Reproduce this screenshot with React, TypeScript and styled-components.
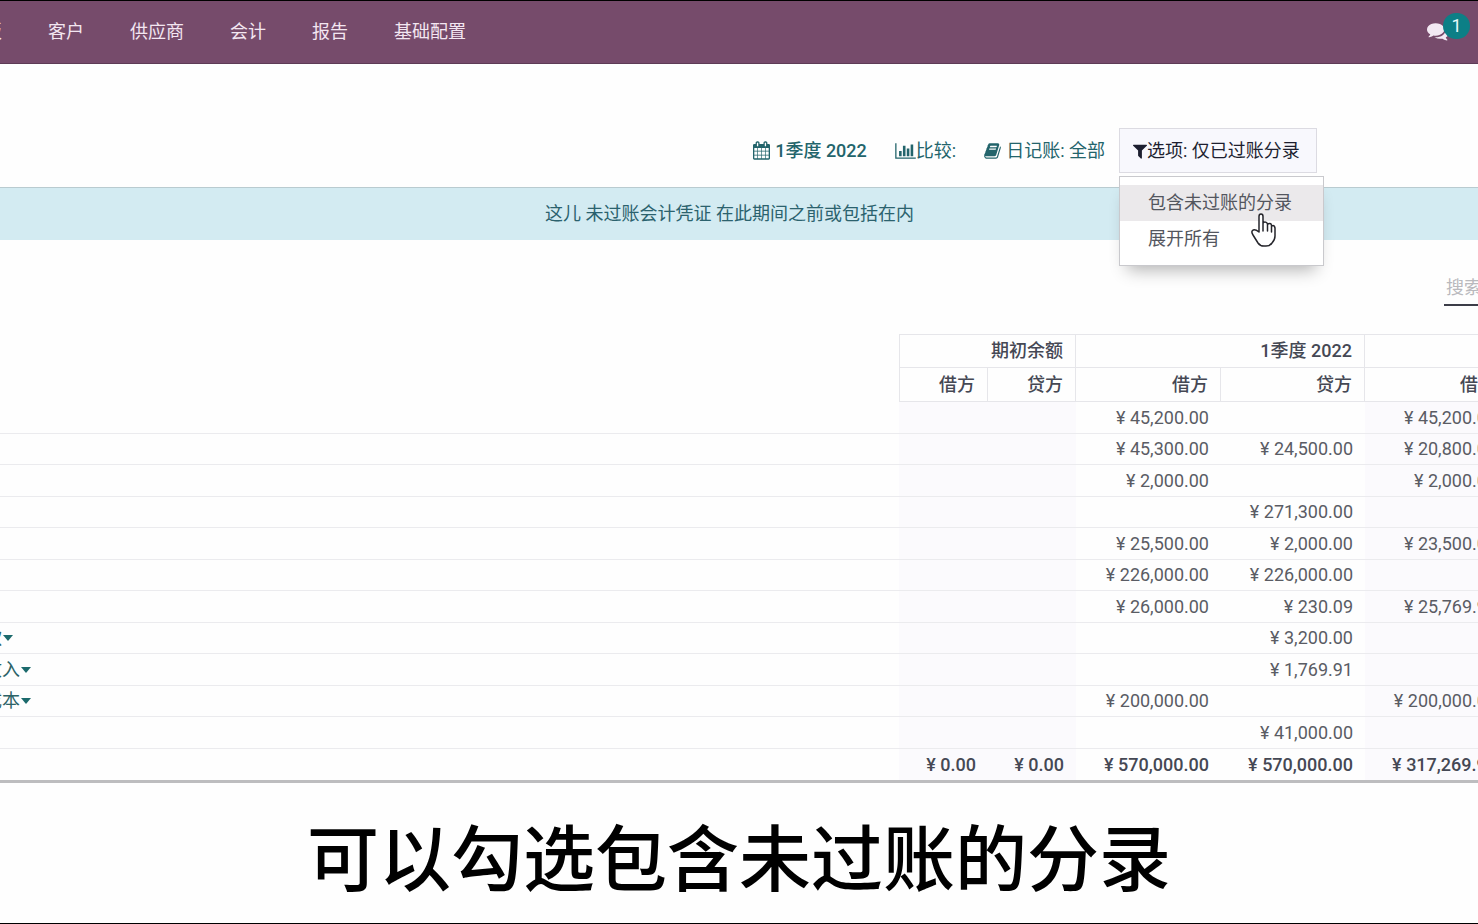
import React from "react";
import styled, { createGlobalStyle, css } from "styled-components";

const GlobalStyle = createGlobalStyle`
  *, *::before, *::after { box-sizing: border-box; }
  body {
    margin: 0;
    background: #fefefe;
    color: #4c4f57;
    font-family: Roboto, "Noto Sans CJK SC", sans-serif;
    font-size: 18px;
    line-height: 26px;
    overflow-x: hidden;
  }
  button, input { font: inherit; color: inherit; }
`;

const Page = styled.div`
  min-height: 100vh;
  display: flex;
  flex-direction: column;
  overflow-x: clip;
  border-top: 1px solid #000;
  border-bottom: 1px solid #000;
`;

const TopBar = styled.header`
  display: flex;
  align-items: center;
  justify-content: space-between;
  height: 63px;
  padding: 0 8px 0 0;
  background: #764b6b;
  border-bottom: 1px solid #5d3b56;
`;

const NavList = styled.nav`
  display: flex;
  gap: 46px;
  margin-left: -34px;
`;

const NavLink = styled.a`
  color: #f3e6f1;
  text-decoration: none;
  white-space: nowrap;
`;

const MessagesButton = styled.button`
  position: relative;
  display: flex;
  width: 43px;
  height: 36px;
  padding: 6px 0 0;
  border: 0;
  background: none;
  color: #f3e9f3;
`;

const Badge = styled.span`
  position: absolute;
  top: -1px;
  right: 0;
  width: 27px;
  height: 26px;
  border-radius: 13px;
  background: #0c7f86;
  color: #e6fafa;
  font-size: 18px;
  line-height: 25px;
  text-align: center;
`;

const FilterBar = styled.div`
  display: flex;
  justify-content: flex-end;
  height: 123px;
  padding: 64px 161px 14px 0;
`;

const FilterButton = styled.button<{ $open?: boolean; $strong?: boolean; $gap?: number }>`
  display: flex;
  align-items: center;
  justify-content: center;
  gap: ${(p) => p.$gap ?? 0}px;
  height: 45px;
  padding: 0 13px;
  border: 1px solid transparent;
  background: transparent;
  color: #23646b;
  font-weight: ${(p) => (p.$strong ? 500 : 400)};
  white-space: nowrap;
  ${(p) =>
    p.$open &&
    css`
      justify-content: flex-start;
      min-width: 198px;
      border-color: #dcdbe2;
      background: #f8f8fd;
      color: #1d1f30;
    `}
`;

const Dropdown = styled.div`
  position: relative;
`;

const Menu = styled.div`
  position: absolute;
  z-index: 2;
  top: 48px;
  left: 0;
  width: 205px;
  padding: 8px 0;
  border: 1px solid #c9c9cd;
  background: #fff;
  box-shadow: 0 12px 16px -8px rgba(0, 0, 0, 0.3);
`;

const MenuItem = styled.button<{ $hovered?: boolean }>`
  display: block;
  width: 100%;
  height: 36px;
  padding: 0 0 0 28px;
  border: 0;
  background: ${(p) => (p.$hovered ? "#ebe9eb" : "transparent")};
  color: #53565e;
  text-align: left;
`;

const Pointer = styled.svg`
  position: absolute;
  top: 35px;
  left: 131px;
`;

const Notice = styled.div`
  height: 53px;
  padding: 13px 19px 13px 0;
  border-top: 1px solid #b9cbd0;
  background: #d3ebf2;
  color: #2b626e;
  text-align: center;
`;

const SearchRow = styled.div`
  display: flex;
  justify-content: flex-end;
  padding: 33px 0 28px;
`;

const SearchInput = styled.input`
  width: 240px;
  height: 33px;
  margin-right: -206px;
  padding: 0 2px 3px;
  border: 0;
  border-bottom: 2px solid #3c3d48;
  border-radius: 0;
  background: transparent;
  outline: 0;
  &::placeholder { color: #b9b9bd; opacity: 1; }
`;

const TableFrame = styled.div`
  margin-right: -31px;
`;

const Ledger = styled.table`
  width: 100%;
  table-layout: fixed;
  border-collapse: separate;
  border-spacing: 0;
  border-bottom: 3px solid #bdbdbf;
`;

const Col = styled.col<{ $w?: number }>`
  width: ${(p) => (p.$w ? `${p.$w}px` : "auto")};
`;

const HeadRow = styled.tr<{ $h: number }>`
  height: ${(p) => p.$h}px;
`;

const HeadCell = styled.th<{ $first?: boolean }>`
  padding: 0 12px 0 0;
  border-top: 1px solid #e6e6ea;
  border-right: 1px solid #e6e6ea;
  border-left: ${(p) => (p.$first ? "1px solid #e6e6ea" : "0")};
  color: #454854;
  font-weight: 500;
  text-align: right;
  white-space: nowrap;
`;

const HeadSpacer = styled.td`
  padding: 0;
`;

const BodyRow = styled.tr<{ $total?: boolean }>`
  height: 32px;
  font-weight: ${(p) => (p.$total ? 500 : 400)};
  color: ${(p) => (p.$total ? "#454854" : "#5a5c64")};
  &:nth-child(even):not(:last-child) { height: 31px; }
`;

const AmountCell = styled.td<{ $tinted?: boolean }>`
  padding: 0 12px 0 0;
  border-top: 1px solid #ebebee;
  background: ${(p) => (p.$tinted ? "#fbfafd" : "transparent")};
  line-height: 24px;
  text-align: right;
  white-space: nowrap;
  tr:first-child > & { border-top-color: #e6e6ea; }
`;

const NameCell = styled.th`
  padding: 0;
  border-top: 1px solid #ebebee;
  font-weight: 400;
  line-height: 24px;
  text-align: left;
  tr:first-child > & { border-top-color: transparent; }
`;

const AccountButton = styled.button<{ $hidden: number }>`
  display: flex;
  align-items: center;
  gap: 1px;
  margin-left: -${(p) => p.$hidden}px;
  padding: 0;
  border: 0;
  background: none;
  color: #2c6367;
  line-height: 24px;
`;

const Caret = styled.span`
  border: 5px solid transparent;
  border-top: 6px solid #1c6a6c;
  border-bottom: 0;
`;

const Caption = styled.p`
  margin: 0;
  padding: 19px 0 16px;
  color: #000;
  font-family: "Noto Sans CJK SC", sans-serif;
  font-size: 72px;
  font-weight: 500;
  line-height: 104px;
  text-align: center;
  white-space: nowrap;
`;

type IconProps = { box: string; width: number; height: number; d: string };
const Icon = ({ box, width, height, d }: IconProps) => (
  <svg viewBox={box} width={width} height={height} fill="currentColor" aria-hidden="true">
    <path d={d} />
  </svg>
);

const CALENDAR =
  "M128 1664h288v-288H128v288zm352 0h320v-288H480v288zM128 1312h288V992H128v320zm352 0h320V992H480v320zM128 928h288V640H128v288zm736 736h320v-288H864v288zM480 928h320V640H480v288zm768 736h288v-288h-288v288zm-384-352h320V992H864v320zM512 448V160q0-13-9.500-22.500T480 128h-64q-13 0-22.500 9.500T384 160v288q0 13 9.500 22.500T416 480h64q13 0 22.500-9.500T512 448zm736 864h288V992h-288v320zM864 928h320V640H864v288zm384 0h288V640h-288v288zm32-480V160q0-13-9.500-22.500T1248 128h-64q-13 0-22.500 9.500T1152 160v288q0 13 9.500 22.500t22.500 9.500h64q13 0 22.500-9.500t9.500-22.500zm384-64v1280q0 52-38 90t-90 38H128q-52 0-90-38t-38-90V384q0-52 38-90t90-38h128v-96q0-66 47-113T416 0h64q66 0 113 47t47 113v96h384v-96q0-66 47-113t113-47h64q66 0 113 47t47 113v96h128q52 0 90 38t38 90z";
const BARS =
  "M640 896v512H384V896h256zm384-512v1024H768V384h256zm1024 1152v128H0V128h128v1408h1920zm-640-896v768h-256V640h256zm384-384v1152h-256V256h256z";
const BOOK =
  "M1639 478q40 57 18 129l-275 906q-19 64-76.500 107.500T1183 1664H260q-77 0-148.500-53.500T12 1479q-24-67-2-127 0-4 3-27t4-37q1-8-3-21.500t-3-19.500q2-11 8-21t16.500-23.500T52 1179q23-38 45-91.500t30-91.500q3-10 .5-30t-.5-28q3-11 17-28t17-23q21-36 42-92t25-90q1-9-2.500-32t.5-28q4-13 22-30.500t22-22.500q19-26 42.500-84.500T340 411q1-8-3-25.500t-2-26.500q2-8 9-18t18-23 17-21q8-12 16.500-30.500t15-35 16-36 19.500-32T469.500 140t36-11.500T553 134l-1 3q38-9 51-9h761q74 0 114 56t18 130l-274 906q-36 119-71.500 153.500T1022 1408H153q-27 0-38 15-11 16-1 43 24 70 144 70h923q29 0 56-15.500t35-41.500l300-987q7-22 5-57 38 15 59 43zm-1064 2q-4 13 2 22.500t20 9.500h608q13 0 25.500-9.500T1247 480l21-64q4-13-2-22.500t-20-9.500H638q-13 0-25.500 9.500T596 416zm-83 256q-4 13 2 22.500t20 9.500h608q13 0 25.500-9.500T1164 736l21-64q4-13-2-22.500t-20-9.500H555q-13 0-25.500 9.500T513 672z";
const FUNNEL =
  "M1403 295q17 41-14 70l-493 493v742q0 42-39 59-13 5-25 5-27 0-45-19l-256-256q-19-19-19-45V858L19 365Q-12 336 5 295q17-39 59-39h1280q42 0 59 39z";
const COMMENTS =
  "M1408 768q0 139-94 257t-256.500 186.500T704 1280q-86 0-176-16-124 88-278 128-36 9-86 16h-3q-11 0-20.500-8t-11.500-21q-1-3-1-6.500t.5-6.500 2-6l2.500-5 3.500-5.500 4-5 4.500-5 4-4.500q5-6 23-25t26-29.500 22.500-29 25-38.500 20.500-44q-124-72-195-177T0 768q0-139 94-257t256.500-186.500T704 256t353.500 68.500T1314 511t94 257zm384 256q0 120-71 224.500T1526 1425q10 24 20.500 44t25 38.500 22.500 29 26 29.500 23 25q1 1 4 4.500t4.500 5 4 5 3.500 5.500l2.500 5 2 6 .5 6.500-1 6.500q-3 14-13 22t-22 7q-50-7-86-16-154-40-278-128-90 16-176 16-271 0-472-132 58 4 88 4 161 0 309-45t264-129q125-92 192-212t67-254q0-77-23-152 129 71 204 178t75 230z";

type Row = { name?: string; hidden?: number; cells: string[]; total?: boolean };
const rows: Row[] = [
  { cells: ["", "", "45,200.00", "", "45,200.00"] },
  { cells: ["", "", "45,300.00", "24,500.00", "20,800.00"] },
  { cells: ["", "", "2,000.00", "", "2,000.00"] },
  { cells: ["", "", "", "271,300.00", ""] },
  { cells: ["", "", "25,500.00", "2,000.00", "23,500.00"] },
  { cells: ["", "", "226,000.00", "226,000.00", ""] },
  { cells: ["", "", "26,000.00", "230.09", "25,769.91"] },
  { name: "款", hidden: 16, cells: ["", "", "", "3,200.00", ""] },
  { name: "收入", hidden: 16, cells: ["", "", "", "1,769.91", ""] },
  { name: "成本", hidden: 16, cells: ["", "", "200,000.00", "", "200,000.00"] },
  { cells: ["", "", "", "41,000.00", ""] },
  { total: true, cells: ["0.00", "0.00", "570,000.00", "570,000.00", "317,269.91"] },
];

export default function App() {
  return (
    <>
      <GlobalStyle />
      <Page>
        <TopBar>
          <NavList>
            {["看板", "客户", "供应商", "会计", "报告", "基础配置"].map((label) => (
              <NavLink href="#" key={label}>{label}</NavLink>
            ))}
          </NavList>
          <MessagesButton aria-label="1">
            <Icon box="0 0 1792 1792" width={22} height={22} d={COMMENTS} />
            <Badge>1</Badge>
          </MessagesButton>
        </TopBar>

        <main>
          <FilterBar>
            <FilterButton $strong $gap={5}>
              <Icon box="0 0 1664 1792" width={17} height={19} d={CALENDAR} />
              1季度 2022
            </FilterButton>
            <FilterButton>
              <Icon box="0 0 2048 1792" width={21} height={18} d={BARS} />
              比较:
            </FilterButton>
            <FilterButton $gap={5}>
              <Icon box="0 0 1664 1792" width={17} height={18} d={BOOK} />
              日记账: 全部
            </FilterButton>
            <Dropdown>
              <FilterButton $open aria-expanded="true" aria-haspopup="menu">
                <Icon box="0 0 1408 1792" width={14} height={18} d={FUNNEL} />
                选项: 仅已过账分录
              </FilterButton>
              <Menu role="menu">
                <MenuItem role="menuitem" $hovered>包含未过账的分录</MenuItem>
                <MenuItem role="menuitem">展开所有</MenuItem>
                <Pointer width="27" height="36" viewBox="0 0 27 36" aria-hidden="true">
                  <path
                    d="M8 20V4.500Q8 2 10 2t2 2.500V14V11.500q0-1.500 2-1.500t2.500 2V15v-2q0-1.500 2-1.500t2 2V17v-2q0-1.500 1.500-1.500t2 2.500v8q0 4-3 7-2 3-6 3h-2q-4 0-6-3l-5-8q-2-3-.5-4.500Q3.500 16.500 8 20zM12 14v5M16.500 15v4M20.500 17v3"
                    fill="#fff"
                    stroke="#25252b"
                    strokeWidth="1.500"
                    strokeLinejoin="round"
                    strokeLinecap="round"
                  />
                </Pointer>
              </Menu>
            </Dropdown>
          </FilterBar>

          <Notice role="status">这儿 未过账会计凭证 在此期间之前或包括在内</Notice>

          <SearchRow>
            <SearchInput type="search" placeholder="搜索..." aria-label="搜索" />
          </SearchRow>

          <TableFrame>
            <Ledger>
              <colgroup>
                <Col />
                <Col $w={89} />
                <Col $w={88} />
                <Col $w={145} />
                <Col $w={144} />
                <Col $w={144} />
              </colgroup>
              <thead>
                <HeadRow $h={33}>
                  <HeadSpacer rowSpan={2} />
                  <HeadCell colSpan={2} $first>期初余额</HeadCell>
                  <HeadCell colSpan={2}>1季度 2022</HeadCell>
                  <HeadCell />
                </HeadRow>
                <HeadRow $h={34}>
                  <HeadCell $first>借方</HeadCell>
                  <HeadCell>贷方</HeadCell>
                  <HeadCell>借方</HeadCell>
                  <HeadCell>贷方</HeadCell>
                  <HeadCell>借方</HeadCell>
                </HeadRow>
              </thead>
              <tbody>
                {rows.map((row, i) => (
                  <BodyRow key={i} $total={row.total}>
                    <NameCell scope="row">
                      {row.name && (
                        <AccountButton $hidden={row.hidden ?? 0}>
                          {row.name}
                          <Caret />
                        </AccountButton>
                      )}
                    </NameCell>
                    {row.cells.map((value, c) => (
                      <AmountCell key={c} $tinted={c < 2 || c === 4}>
                        {value && `¥ ${value}`}
                      </AmountCell>
                    ))}
                  </BodyRow>
                ))}
              </tbody>
            </Ledger>
          </TableFrame>
        </main>

        <Caption>可以勾选包含未过账的分录</Caption>
      </Page>
    </>
  );
}
